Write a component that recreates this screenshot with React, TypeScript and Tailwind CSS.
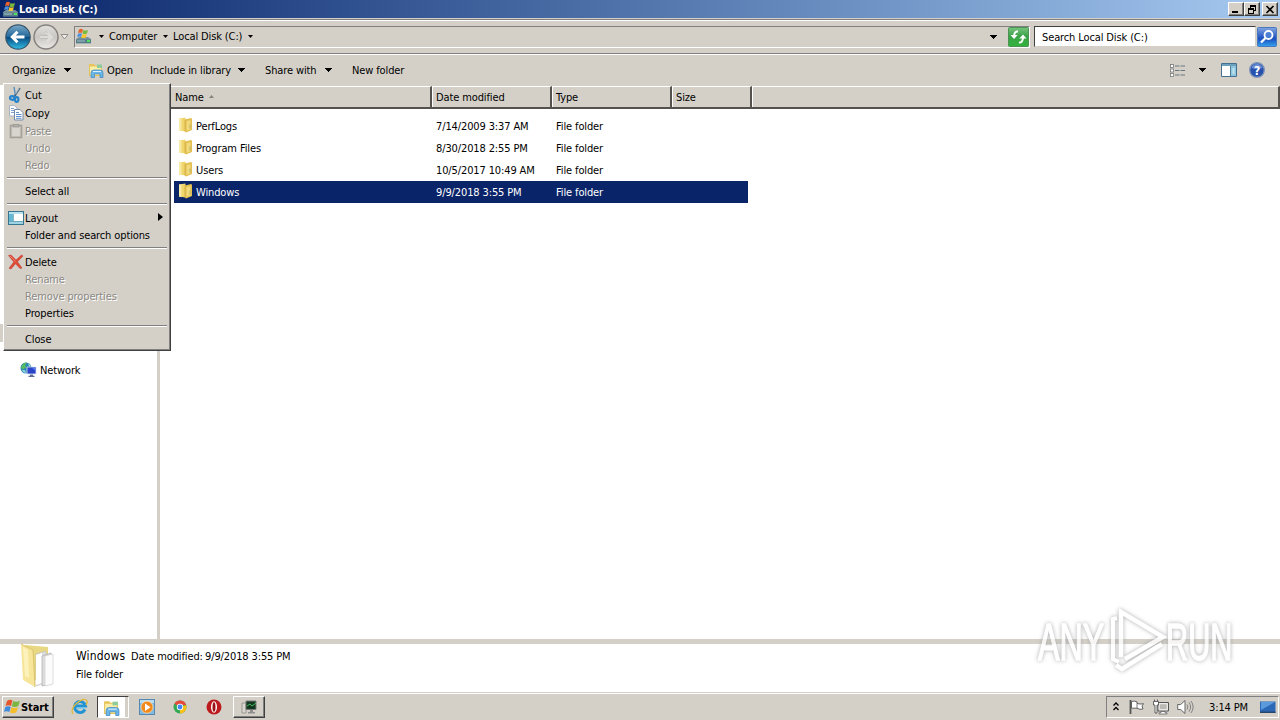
import React, { type ReactNode } from "react";

interface MenuEntry {
  label: string;
  icon?: ReactNode;
  disabled?: boolean;
  tall?: boolean;
  submenu?: boolean;
}

interface FileEntry {
  name: string;
  modified: string;
  selected?: boolean;
}

const files: FileEntry[] = [
  { name: "PerfLogs", modified: "7/14/2009 3:37 AM" },
  { name: "Program Files", modified: "8/30/2018 2:55 PM" },
  { name: "Users", modified: "10/5/2017 10:49 AM" },
  { name: "Windows", modified: "9/9/2018 3:55 PM", selected: true },
];

const raised =
  "border border-t-white border-l-white border-r-[#404040] border-b-[#404040] shadow-[inset_-1px_-1px_0_#808080]";

function Caret({ className = "" }: { className?: string }) {
  return (
    <svg width="7" height="4" viewBox="0 0 7 4" className={`shrink-0 ${className}`} shapeRendering="crispEdges">
      <path d="M0 0h7L3.5 4z" fill="#000" />
    </svg>
  );
}

function CrumbCaret({ className = "" }: { className?: string }) {
  return (
    <svg width="5" height="3" viewBox="0 0 5 3" className={`shrink-0 ${className}`}>
      <path d="M0 0h5L2.5 3z" fill="#000" />
    </svg>
  );
}

function DriveIcon({ size = 17 }: { size?: number }) {
  return (
    <svg width={size} height={size} viewBox="0 0 17 17" className="shrink-0">
      <path d="M1 11l3-2h9l3 2v4.500H1z" fill="#79939c" />
      <path d="M1 11.500h15v3.500H1z" fill="#547b87" />
      <path d="M2 12.500h8v1H2z" fill="#a8c4cc" />
      <rect x="12" y="12" width="3" height="2" fill="#4fe05c" />
      <path d="M4 1.500q2-1.500 4 0L7 5Q5 4 3 5z" fill="#e8642c" />
      <path d="M8.500 2q2 1 4.500 0l-1 3.500q-2 1-4.500 0z" fill="#79b93c" />
      <path d="M3 5.700q2-1 4 0L6 9Q4 8 2 9z" fill="#4a8fdd" />
      <path d="M7.400 6q2 1 4.500 0l-1 3.500q-2 1-4.500 0z" fill="#f6c62c" />
    </svg>
  );
}

function FolderIcon() {
  return (
    <svg width="14" height="16" viewBox="0 0 14 16" className="shrink-0">
      <path d="M0 1.500L6.500.5v14L0 13.500z" fill="#efd56c" />
      <path d="M0 1.500l2.500-.3v13L0 13.500z" fill="#f8eaa4" />
      <path d="M6 2.500l6-1.500 1 .7V13l-6 2.500-1-1z" fill="#e2bf50" />
      <path d="M7.500 4l4-.8v9l-4 1.800z" fill="#f2da7c" />
      <path d="M6 2.500v12" stroke="#d1aa3c" strokeWidth=".7" />
      <path d="M10.500 7.500h1v4h-1z" fill="#b6b06a" />
    </svg>
  );
}

function ExplorerIcon({ size = 16 }: { size?: number }) {
  return (
    <svg width={size} height={size} viewBox="0 0 16 16" className="shrink-0">
      <path d="M1 2h5l1 1.500h7V14H1z" fill="#e6c45a" />
      <path d="M2 4.500h11V13H2z" fill="#fbeea8" />
      <path d="M9 2.500h5V6H9z" fill="#8ecb9a" />
      <path d="M3 15.500V11q0-3 3-3h6q3 0 3 3v4.500h-3V12H6.500v3.500z" fill="#6db6e8" stroke="#3b84bf" strokeWidth=".7" />
      <path d="M5 9.500h8" stroke="#d8f1fd" />
    </svg>
  );
}

function BackButton() {
  return (
    <svg width="26" height="26" viewBox="0 0 26 26" className="shrink-0">
      <defs>
        <linearGradient id="back" x1="0" y1="0" x2="0" y2="1">
          <stop offset="0" stopColor="#7ba9c7" />
          <stop offset=".48" stopColor="#23689b" />
          <stop offset=".52" stopColor="#084c83" />
          <stop offset="1" stopColor="#33bfe6" />
        </linearGradient>
      </defs>
      <circle cx="13" cy="13" r="12.200" fill="url(#back)" stroke="#38566b" strokeWidth="1.200" />
      <path d="M19.500 13H8M12.500 7.800L7.300 13l5.200 5.200" fill="none" stroke="#fff" strokeWidth="3" />
    </svg>
  );
}

function ForwardButton() {
  return (
    <svg width="26" height="26" viewBox="0 0 26 26" className="ml-[2px] shrink-0">
      <defs>
        <linearGradient id="forward" x1="0" y1="0" x2="0" y2="1">
          <stop offset="0" stopColor="#e3e1de" />
          <stop offset=".5" stopColor="#c9c6c2" />
          <stop offset="1" stopColor="#eceae7" />
        </linearGradient>
      </defs>
      <circle cx="13" cy="13" r="12" fill="url(#forward)" stroke="#85827f" strokeWidth="1.500" />
      <path d="M7 13h11M13.500 8l5 5-5 5" fill="none" stroke="#dedcd8" strokeWidth="2.800" />
      <path d="M7 11.500h8M13 7l2 2M7 14.500h8" fill="none" stroke="#b5b2ae" strokeWidth=".6" />
    </svg>
  );
}

function RefreshIcon() {
  return (
    <svg width="21" height="20" viewBox="0 0 21 20" className="shrink-0">
      <defs>
        <linearGradient id="refresh" x1="0" y1="0" x2="0" y2="1">
          <stop offset="0" stopColor="#79c47f" />
          <stop offset=".45" stopColor="#3aa347" />
          <stop offset="1" stopColor="#32b33c" />
        </linearGradient>
      </defs>
      <rect x=".5" y=".5" width="20" height="19" rx="1" fill="url(#refresh)" stroke="#4c9254" />
      <path d="M10 4.500Q6.500 4 6 9" fill="none" stroke="#fff" strokeWidth="2" />
      <path d="M2.500 8h7.200L6 12z" fill="#fff" />
      <path d="M11 15.500q3.500.5 4-4.500" fill="none" stroke="#fff" strokeWidth="2" />
      <path d="M11.300 11.500h7.200L15 7.500z" fill="#fff" />
    </svg>
  );
}

function SearchIcon() {
  return (
    <svg width="20" height="20" viewBox="0 0 20 20" className="shrink-0">
      <defs>
        <linearGradient id="search" x1="0" y1="0" x2="0" y2="1">
          <stop offset="0" stopColor="#84a6e0" />
          <stop offset=".45" stopColor="#2f62c8" />
          <stop offset=".6" stopColor="#1c4fc0" />
          <stop offset="1" stopColor="#35a4ee" />
        </linearGradient>
      </defs>
      <rect x=".5" y=".5" width="19" height="19" rx="1" fill="url(#search)" stroke="#4a78bd" />
      <circle cx="11.500" cy="8" r="4" fill="#4b7fd8" stroke="#fff" strokeWidth="1.800" />
      <path d="M8.500 11L4 15.500" stroke="#fff" strokeWidth="2.300" />
    </svg>
  );
}

function CutIcon() {
  return (
    <svg width="16" height="16" viewBox="0 0 16 16">
      <path d="M6 0L7.500 9" stroke="#5d91bb" strokeWidth="1.500" />
      <path d="M12 1L6 10" stroke="#476781" strokeWidth="1.600" />
      <path d="M11 1.500L7.500 7" stroke="#e7eef3" strokeWidth=".6" />
      <ellipse cx="4.200" cy="11" rx="2.200" ry="1.800" fill="none" stroke="#2583cb" strokeWidth="2.200" />
      <ellipse cx="8.700" cy="12.500" rx="1.700" ry="2.300" fill="none" stroke="#2583cb" strokeWidth="2.200" />
    </svg>
  );
}

function CopyIcon() {
  return (
    <svg width="16" height="16" viewBox="0 0 16 16">
      <path d="M1.500.5h5l2.500 2.500v8H1.500z" fill="#fff" stroke="#a9b6c8" />
      <path d="M3 3.500h3M3 5.500h4M3 7.500h3" stroke="#7da0cf" />
      <path d="M6.500 4.500h5.500l3 3V15H6.500z" fill="#fff" stroke="#7489a7" />
      <path d="M8 7.500h3M8 9.500h5.500M8 11.500h5.500M8 13.300h5.500" stroke="#5f8ccb" />
    </svg>
  );
}

function PasteIcon() {
  return (
    <svg width="16" height="16" viewBox="0 0 16 16">
      <rect x="2.500" y="2.500" width="11" height="12" fill="#cbc8c2" stroke="#a4a19b" strokeWidth="1.600" />
      <rect x="4.300" y="4" width="7.500" height="9" fill="#d8d5cf" />
      <path d="M5 1.500h6V4H5z" fill="#b4b1ab" stroke="#94918b" strokeWidth=".7" />
    </svg>
  );
}

function LayoutIcon() {
  return (
    <svg width="16" height="16" viewBox="0 0 16 16">
      <rect x=".5" y="1.500" width="15" height="13" fill="#fff" stroke="#39758e" />
      <path d="M1 2h14v2H1z" fill="#b9e1ed" />
      <path d="M1 4h4v7H1z" fill="#63b8d4" />
      <path d="M1 11h14v3H1z" fill="#9dd3e3" />
      <path d="M5.500 4v7M1 11.500h14" stroke="#5797ac" strokeWidth=".7" />
    </svg>
  );
}

function DeleteIcon() {
  return (
    <svg width="16" height="16" viewBox="0 0 16 16">
      <path d="M.5 1.500L3 1l5 5 5.500-5L15 2 9.500 7.800 14 14l-2 .5L7.500 9.700 3 15l-2-.8L5.800 8z" fill="#e04a38" stroke="#b83427" strokeWidth=".5" />
      <path d="M2 2l5.500 5.500" stroke="#f69a85" strokeWidth=".7" />
    </svg>
  );
}

function NetworkIcon() {
  return (
    <svg width="17" height="16" viewBox="0 0 17 16" className="shrink-0">
      <circle cx="6" cy="6" r="5.500" fill="#2c83b7" />
      <path d="M1.500 4Q4 0 7 .5L5 3.500 6.500 5 3 7.500 1 6z" fill="#57bc62" />
      <path d="M8 1.500l3 2-2 1z" fill="#a5e0c2" />
      <path d="M2 8l3 0 1 3q-3 0-4-3z" fill="#8bd3dc" />
      <path d="M7 5h9v7H7z" fill="#2944c9" stroke="#dce4f2" strokeWidth=".8" />
      <path d="M11.500 5.500h4v3z" fill="#5d80ef" />
      <path d="M10 12.500h3v1.200h1.500V15h-6v-1.300H10z" fill="#5e6f93" />
    </svg>
  );
}

function WindowsFlag() {
  return (
    <svg width="17" height="16" viewBox="0 0 17 16" className="shrink-0">
      <path d="M3 2q3-2 5.500-.5L7 7Q4.500 5.500 1.500 7z" fill="#e6562a" />
      <path d="M9.300 2q3 1.600 6.700-.2L14.300 7q-3.300 1.800-6.500.3z" fill="#7cb642" />
      <path d="M1.300 7.900q3-1.500 5.500 0L5.300 13Q3 11.500 0 12.800z" fill="#3f8bdd" />
      <path d="M7.500 8.200q3 1.600 6.500 0l-1.600 5q-3.200 1.800-6.400.2z" fill="#f5bd2a" />
    </svg>
  );
}

const menuGroups: MenuEntry[][] = [
  [
    { label: "Cut", icon: <CutIcon />, tall: true },
    { label: "Copy", icon: <CopyIcon />, tall: true },
    { label: "Paste", icon: <PasteIcon />, tall: true, disabled: true },
    { label: "Undo", disabled: true },
    { label: "Redo", disabled: true },
  ],
  [{ label: "Select all" }],
  [
    { label: "Layout", icon: <LayoutIcon />, tall: true, submenu: true },
    { label: "Folder and search options" },
  ],
  [
    { label: "Delete", icon: <DeleteIcon />, tall: true },
    { label: "Rename", disabled: true },
    { label: "Remove properties", disabled: true },
    { label: "Properties" },
  ],
  [{ label: "Close" }],
];

function OrganizeMenu() {
  return (
    <div className={`absolute left-[3px] top-[83px] h-[268px] w-[168px] bg-[#d4d0c8] px-px pt-[2px] ${raised}`}>
      {menuGroups.map((group, i) => (
        <div key={i}>
          {i > 0 && (
            <div className="h-[9px] px-[2px] pt-[3px]">
              <div className="h-[2px] w-full border-b border-t border-b-white border-t-[#808080]" />
            </div>
          )}
          {group.map((item) => (
            <div key={item.label} className={`flex items-center pl-[3px] ${item.tall ? "h-[18px]" : "h-[17px]"}`}>
              <div className="w-[17px] shrink-0">{item.icon}</div>
              <span className={item.disabled ? "text-[#8c8984] [text-shadow:1px_1px_0_#fff]" : ""}>{item.label}</span>
              {item.submenu && (
                <svg width="5" height="8" viewBox="0 0 5 8" className="mb-[2px] ml-auto mr-[6px]">
                  <path d="M0 0l5 4-5 4z" />
                </svg>
              )}
            </div>
          ))}
        </div>
      ))}
    </div>
  );
}

function TitleBar() {
  const button = `flex h-[14px] w-4 items-center justify-center bg-[#d4d0c8] ${raised}`;
  return (
    <div className="flex h-[18px] items-center bg-linear-to-r from-[#0a246a] to-[#a6caf0] pl-[2px] pr-[2px]">
      <DriveIcon size={17} />
      <span className="text-[11px] font-bold tracking-[-0.1px] text-white">Local Disk (C:)</span>
      <div className="ml-auto flex">
        <div className={button}>
          <svg width="10" height="9" shapeRendering="crispEdges">
            <path d="M1 6h6v2H1z" />
          </svg>
        </div>
        <div className={button}>
          <svg width="10" height="9" shapeRendering="crispEdges">
            <path d="M3 0h6v6H7V5h1V2H4v1H3zM1 3h6v6H1zM2 5v3h4V5z" fillRule="evenodd" />
          </svg>
        </div>
        <div className={`ml-[2px] ${button}`}>
          <svg width="10" height="9">
            <path d="M1.500 1l7 7M8.500 1l-7 7" stroke="#000" strokeWidth="1.600" />
          </svg>
        </div>
      </div>
    </div>
  );
}

function AddressBar() {
  return (
    <div className="mt-px flex h-[35px] items-center border-b border-t border-b-[#808080] border-t-[#808080] pl-[5px] shadow-[inset_0_1px_0_#fff,0_1px_0_#fff]">
      <div className="flex pt-px">
        <BackButton />
        <ForwardButton />
      </div>
      <svg width="9" height="6" viewBox="0 0 9 6" className="ml-px shrink-0">
        <path d="M1 .5h7L4.500 5z" fill="#f0eeea" stroke="#918e89" />
      </svg>
      <div className="ml-[5px] flex h-[22px] w-[956px] items-center border border-b-white border-l-[#808080] border-r-white border-t-[#808080]">
        <DriveIcon />
        <CrumbCaret className="ml-[7px]" />
        <span className="ml-[5px] w-[48px]">Computer</span>
        <CrumbCaret className="ml-[6px]" />
        <span className="ml-[5px] w-[69px]">Local Disk (C:)</span>
        <CrumbCaret className="ml-[6px]" />
        <Caret className="ml-auto mr-[32px]" />
      </div>
      <div className="-ml-[22px]">
        <RefreshIcon />
      </div>
      <div className="ml-[5px] flex h-[21px] w-[222px] items-center border border-b-[#d4d0c8] border-l-[#404040] border-r-[#d4d0c8] border-t-[#404040] bg-white pl-[7px] pt-px">
        Search Local Disk (C:)
      </div>
      <div className="ml-px">
        <SearchIcon />
      </div>
    </div>
  );
}

function Toolbar() {
  return (
    <div className="flex h-[31px] items-center pl-3 pt-px">
      <span className="w-[45px]">Organize</span>
      <Caret className="ml-[7px]" />
      <div className="ml-[17px] flex w-[62px] items-center gap-[3px]">
        <ExplorerIcon />
        <span>Open</span>
      </div>
      <span className="w-[81px]">Include in library</span>
      <Caret className="ml-[7px]" />
      <span className="ml-5 w-[53px]">Share with</span>
      <Caret className="ml-[7px]" />
      <span className="ml-5">New folder</span>
      <svg width="16" height="13" viewBox="0 0 16 13" className="ml-auto shrink-0">
        {[0, 4.5, 9].map((y) => (
          <g key={y} transform={`translate(0 ${y})`}>
            <rect x=".5" y=".5" width="3" height="3" fill="#fff" stroke="#777" strokeWidth=".8" />
            <path d="M5 2h4.500M10.500 2H15" stroke="#6a7780" />
          </g>
        ))}
      </svg>
      <Caret className="ml-[13px]" />
      <svg width="16" height="14" viewBox="0 0 16 14" className="ml-[15px] shrink-0">
        <path d="M.5.500h15v13H.5z" fill="#fff" stroke="#456f8f" />
        <path d="M1 1h14v2H1z" fill="#6d9fbe" />
        <path d="M10 3h5v10h-5z" fill="#8ec6df" />
        <path d="M9.500 3v10" stroke="#527f9b" />
        <path d="M11.500 5h2v6h-2z" fill="#c0e5f1" />
      </svg>
      <svg width="16" height="16" viewBox="0 0 16 16" className="ml-3 mr-[15px] shrink-0">
        <circle cx="8" cy="8" r="7.300" fill="#2850ad" stroke="#7c93ba" strokeWidth="1.400" />
        <path d="M2.500 6Q4 2 8 2t5.500 4Q8 8 2.500 6z" fill="#6c8fd4" />
        <text x="8" y="12.500" textAnchor="middle" fontSize="12" fontWeight="700" fill="#fff">?</text>
      </svg>
    </div>
  );
}

function HeaderCell({ className, children }: { className: string; children?: ReactNode }) {
  return (
    <div className={`flex items-center border-b-2 border-r-2 border-t border-b-[#55524e] border-r-[#55524e] border-t-white pl-1 pt-px shadow-[inset_1px_0_0_#fff] ${className}`}>
      {children}
    </div>
  );
}

function FileList() {
  return (
    <div className="flex-1 bg-white">
      <div className="flex h-[23px] bg-[#d4d0c8]">
        <HeaderCell className="w-[272px] pl-[15px]">
          Name
          <svg width="5" height="3" className="mb-[2px] ml-[5px]">
            <path d="M0 3h5L2.500 0z" fill="#85827d" />
          </svg>
        </HeaderCell>
        <HeaderCell className="w-[120px]">Date modified</HeaderCell>
        <HeaderCell className="w-[120px]">Type</HeaderCell>
        <HeaderCell className="w-[80px]">Size</HeaderCell>
        <HeaderCell className="flex-1" />
      </div>
      <div className="ml-[14px] mt-[6px] w-[574px]">
        {files.map((file) => (
          <div key={file.name} className={`flex h-[22px] items-center pl-[5px] ${file.selected ? "bg-[#0a246a] text-white" : ""}`}>
            <div className="pb-[2px]">
              <FolderIcon />
            </div>
            <span className="ml-[3px] w-[240px]">{file.name}</span>
            <span className="w-[120px]">{file.modified}</span>
            <span>File folder</span>
          </div>
        ))}
      </div>
    </div>
  );
}

function DetailsPane() {
  return (
    <div className="flex h-12 bg-white pl-5">
      <svg width="36" height="44" viewBox="0 0 36 44" className="shrink-0">
        <path d="M5 1l23 2v32l-23 2z" fill="#e8d783" />
        <path d="M16 10l10-3 2 31-12 4z" fill="#ddd" stroke="#bbb" strokeWidth=".5" />
        <path d="M16 11l6-2v30l-6 2z" fill="#fff" />
        <path d="M22 12l9-3v31l-9 2z" fill="#ddd" stroke="#aaa" strokeWidth=".7" />
        <path d="M25 12l8-2v30l-8 2z" fill="#fcfcfc" stroke="#d0d0d0" strokeWidth=".7" />
        <path d="M1 0l12 6 2 37L3 36z" fill="#f7e59a" />
        <path d="M1 0l12 6 2 37" fill="none" stroke="#ddc46b" />
        <path d="M3 3l5 3 1 28-4-2z" fill="#fcf2bc" />
      </svg>
      <div className="ml-5 pt-1">
        <div className="flex h-[17px] items-center">
          <span className="w-[55px] text-[12px] tracking-[0.15px]">Windows</span>
          <span className="w-[74px]">Date modified:</span>
          <span>9/9/2018 3:55 PM</span>
        </div>
        <div className="flex h-[18px] items-center">File folder</div>
      </div>
    </div>
  );
}

function Taskbar() {
  return (
    <div className="flex h-7 items-center border-t border-[#d4d0c8] pl-[2px] pt-px shadow-[inset_0_1px_0_#fff]">
      <div className={`flex h-[22px] w-[52px] items-center pl-px ${raised}`}>
        <WindowsFlag />
        <span className="text-[11px] font-bold tracking-[-0.1px]">Start</span>
      </div>
      <svg width="18" height="18" viewBox="0 0 18 18" className="ml-[17px] shrink-0">
        <path d="M14 11.500a5.500 5.500 0 1 1 .5-3.500H5" fill="none" stroke="#2294d4" strokeWidth="3" />
        <path d="M14 10H6" stroke="#70c8ef" strokeWidth="1.500" />
        <path d="M2 16Q-1 11 6 5t10-2q1 1-1 4" fill="none" stroke="#e0b943" strokeWidth="1.400" />
      </svg>
      <div className="ml-2 flex h-[22px] w-[32px] border border-b-white border-l-[#404040] border-r-white border-t-[#404040] bg-white">
        <div className="flex w-[27px] items-center justify-center pt-px">
          <ExplorerIcon size={17} />
        </div>
        <div className="ml-[1px] w-[3px] bg-[#d4d0c8]" />
      </div>
      <svg width="16" height="16" viewBox="0 0 16 16" className="ml-[10px] shrink-0">
        <rect x=".5" y=".5" width="15" height="15" fill="#83b9df" stroke="#5589b1" />
        <path d="M1 1h14v3H1z" fill="#b9dcf1" />
        <circle cx="8" cy="8.200" r="6" fill="#f08a1d" stroke="#fde1b8" strokeWidth=".7" />
        <path d="M6 4.500l5.500 3.700L6 12z" fill="#fff" />
      </svg>
      <svg width="16" height="16" viewBox="0 0 16 16" className="ml-[17px] shrink-0">
        <circle cx="8" cy="8" r="6.500" fill="#34a853" />
        <path d="M8 8L2.400 4.700A6.500 6.500 0 0 1 14.200 6H8z" fill="#e64a3b" />
        <path d="M8 8l6.200-2A6.500 6.500 0 0 1 8 14.500z" fill="#fbc116" />
        <circle cx="8" cy="8" r="3.200" fill="#fff" />
        <circle cx="8" cy="8" r="2.400" fill="#4285f4" />
      </svg>
      <svg width="16" height="16" viewBox="0 0 16 16" className="ml-[18px] shrink-0">
        <circle cx="8" cy="8" r="7.500" fill="#bd1a1e" />
        <ellipse cx="8" cy="8" rx="3" ry="5.800" fill="#fff" />
        <ellipse cx="8" cy="8" rx="1.500" ry="4.800" fill="#9b1216" />
      </svg>
      <div className={`ml-[11px] flex h-[22px] w-8 items-center justify-center ${raised}`}>
        <svg width="17" height="15" viewBox="0 0 17 15">
          <path d="M1 3h4v10H1z" fill="#d9d7d0" stroke="#8b8984" strokeWidth=".8" />
          <path d="M5 1h10v8.500H5z" fill="#13361f" stroke="#777" />
          <path d="M6 6l3-2 2 2 4-3" fill="none" stroke="#47b963" />
          <path d="M9 10h3v2h2v1.500H7V12h2z" fill="#8e8e8e" />
        </svg>
      </div>
      <div className="ml-auto mr-px flex h-[22px] w-[173px] items-center border border-b-white border-l-[#808080] border-r-white border-t-[#808080] pl-[6px]">
        <svg width="6" height="9" viewBox="0 0 6 9" className="mb-px shrink-0">
          <path d="M.5 3.500L3 1l2.500 2.500M.5 8L3 5.500 5.500 8" fill="none" stroke="#000" strokeWidth="1.300" />
        </svg>
        <svg width="16" height="16" viewBox="0 0 16 16" className="ml-[10px] shrink-0">
          <path d="M1.500 1v14" stroke="#555" strokeWidth="1.800" />
          <path d="M2.500 2.500Q5 1.500 8 2.800v1.700q3 1 6.500.2L13 7l1 3q-3 1-6-.8H2.500z" fill="#fff" stroke="#555" strokeWidth=".9" />
          <path d="M8 4.500v4.700" stroke="#555" strokeWidth=".8" />
        </svg>
        <svg width="17" height="16" viewBox="0 0 17 16" className="ml-[8px] shrink-0">
          <path d="M5 3.500h10.500v8.500H5z" fill="#d7d5d0" stroke="#555" />
          <path d="M6.200 4.700h8v6h-8z" fill="#bbb9b4" stroke="#fff" strokeWidth=".8" />
          <path d="M8 12.500h4v1.300h2V15H6v-1.200h2z" fill="#fff" stroke="#555" strokeWidth=".7" />
          <path d="M.5 2.500h5V6H4v8H2V6H.5zM1.500 2.500V.5M4.500 2.500V.5" fill="#fff" stroke="#555" strokeWidth=".9" />
        </svg>
        <svg width="17" height="16" viewBox="0 0 17 16" className="ml-[7px] shrink-0">
          <path d="M.7 5.500h3L8 1.500v13l-4.300-4h-3z" fill="#fff" stroke="#666" />
          <path d="M10 5.500q1.800 2.500 0 5M12 3.500q3.200 4.500 0 9M14 2q4.300 6 0 12" fill="none" stroke="#777" strokeWidth=".9" />
        </svg>
        <span className="ml-[15px] w-[41px] whitespace-nowrap">3:14 PM</span>
        <svg width="16" height="13" viewBox="0 0 16 13" className="ml-[10px] shrink-0">
          <path d="M0 .500h15.500V12H0z" fill="#2b68b6" />
          <path d="M1 1h14L1 9z" fill="#5b9bdc" />
          <path d="M0 10.500h15.500V12H0z" fill="#27446a" />
        </svg>
      </div>
    </div>
  );
}

function Watermark() {
  return (
    <svg
      width="216"
      height="76"
      viewBox="0 0 216 76"
      className="absolute left-[1030px] top-[602px] opacity-80 [filter:drop-shadow(0_0_2px_#999999)]"
    >
      <g fontFamily="Liberation Sans" fontSize="52" letterSpacing="0" fill="#fff" stroke="#fff" strokeWidth="1.6">
        <text transform="translate(8 58) scale(.62 1)">ANY</text>
        <text transform="translate(136 58) scale(.59 1)">RUN</text>
      </g>
      <path d="M87 16l-4 1v40l6 3" fill="none" stroke="#fff" strokeWidth="4" />
      <path d="M91 55V10l42 25-38 22" fill="none" stroke="#fff" strokeWidth="4.500" />
      <path d="M86 63l6 4 40-25" fill="none" stroke="#fff" strokeWidth="4.500" />
    </svg>
  );
}

export default function App() {
  return (
    <div className="relative flex h-[720px] w-[1280px] flex-col overflow-hidden whitespace-nowrap bg-[#d4d0c8] font-['DejaVu_Sans_Condensed','DejaVu_Sans',sans-serif] text-[11px] leading-[13px] tracking-[-0.12px] text-black [font-stretch:condensed]">
      <TitleBar />
      <AddressBar />
      <Toolbar />
      <div className="flex h-[554px]">
        <div className="w-[157px] bg-white">
          <div className="mt-[239px] h-[18px] w-[6px] bg-[#d4d0c8]" />
          <div className="ml-5 mt-[20px] flex items-center gap-[3px]">
            <NetworkIcon />
            <span className="pt-px">Network</span>
          </div>
        </div>
        <div className="w-[3px] bg-[#d4d0c8]" />
        <div className="flex flex-1 pt-px">
          <FileList />
        </div>
      </div>
      <div className="h-[5px]" />
      <DetailsPane />
      <Taskbar />
      <Watermark />
      <OrganizeMenu />
    </div>
  );
}
